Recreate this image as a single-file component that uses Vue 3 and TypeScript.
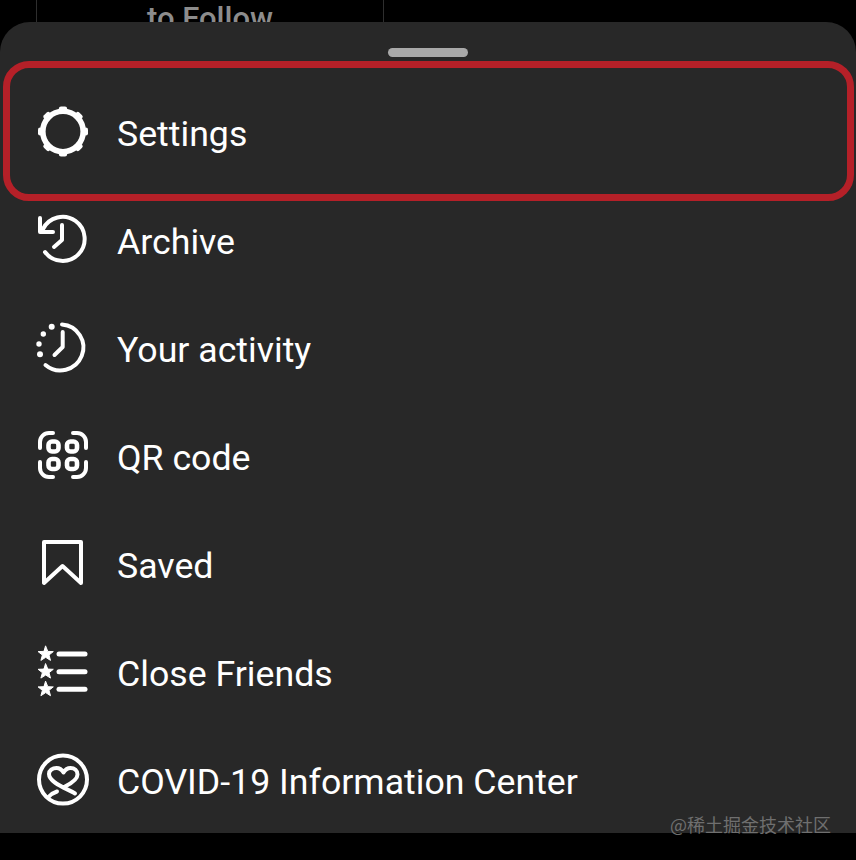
<script setup lang="ts">
const rows = [
  { icon: "settings", label: "Settings", active: true },
  { icon: "archive", label: "Archive" },
  { icon: "activity", label: "Your activity" },
  { icon: "qr", label: "QR code" },
  { icon: "saved", label: "Saved" },
  { icon: "friends", label: "Close Friends" },
  { icon: "covid", label: "COVID-19 Information Center" },
];

const gearTeeth = [0, 45, 90, 135, 180, 225, 270, 315];
const starRows = [10, 27.7, 45.3];
</script>

<template>
  <div class="screen">
    <div class="backdrop">
      <div class="behind-card">
        <span class="behind-text">to Follow</span>
      </div>
    </div>

    <div class="sheet">
      <div class="handle"></div>

      <div v-for="row in rows" :key="row.label" class="row">
        <span v-if="row.active" class="highlight"></span>

        <svg class="icon" viewBox="0 0 54 54" fill="none" stroke="#fff" stroke-width="4" stroke-linecap="round" stroke-linejoin="round">
          <template v-if="row.icon === 'settings'">
            <circle cx="27" cy="27.5" r="20.2" stroke-width="5.6" />
            <path
              v-for="a in gearTeeth"
              :key="a"
              d="M25 4.6 H29"
              stroke-width="4.2"
              :transform="`rotate(${a} 27 27.5)`"
            />
          </template>

          <template v-else-if="row.icon === 'archive'">
            <path d="M4 6 V20 H17" />
            <path d="M7 17 A22 22 0 1 1 9 40" />
            <path d="M26 13 V28 L18 35" />
          </template>

          <template v-else-if="row.icon === 'activity'">
            <path d="M26 4.5 A23 23 0 1 1 9.5 45" />
            <path d="M26.7 12 V27 L18.5 35" />
            <g fill="#fff" stroke="none">
              <circle cx="15.7" cy="6.7" r="3" />
              <circle cx="7.3" cy="14" r="2.7" />
              <circle cx="3" cy="24" r="2.7" />
              <circle cx="4" cy="34.3" r="3" />
            </g>
          </template>

          <template v-else-if="row.icon === 'qr'">
            <path d="M17 5 H13 A9 9 0 0 0 4 14 V20" />
            <path d="M37 5 H41 A9 9 0 0 1 50 14 V20" />
            <path d="M4 34 V40 A9 9 0 0 0 13 49 H17" />
            <path d="M50 34 V40 A9 9 0 0 1 41 49 H37" />
            <g stroke-width="4.6">
              <rect x="12.5" y="13.5" width="10" height="10" rx="3.5" />
              <rect x="31" y="13.5" width="10" height="10" rx="3.5" />
              <rect x="12.5" y="31" width="10" height="10" rx="3.5" />
              <rect x="31" y="31" width="10" height="10" rx="3.5" />
            </g>
          </template>

          <template v-else-if="row.icon === 'saved'">
            <path d="M8 6 H45 V47 L26.5 30 L8 47 Z" />
          </template>

          <template v-else-if="row.icon === 'friends'">
            <g v-for="y in starRows" :key="y">
              <polygon
                points="0,-7.8 2.1,-2.6 7.6,-2.4 3.3,1 4.8,6.4 0,3.3 -4.8,6.4 -3.3,1 -7.6,-2.4 -2.1,-2.6"
                fill="#fff"
                stroke-width="1"
                :transform="`translate(9.7 ${y})`"
              />
              <path :d="`M23 ${y} H49`" stroke-width="5" />
            </g>
          </template>

          <template v-else-if="row.icon === 'covid'">
            <circle cx="27" cy="27.6" r="24" />
            <path d="M39 41.5 C32 37 13 31 13 22 C13 18.5 16.5 16 20.5 16 C24 16 26 18 27.5 20.5 C29 18 31 16 34.5 16 C38.5 16 41.5 18.5 41.5 22.5 C41.5 27.5 35 31.5 29 34.5" />
            <path d="M12.5 45 C15 42 18 40.5 21 39.5" />
          </template>
        </svg>

        <span class="label">{{ row.label }}</span>
      </div>

      <span class="watermark">@稀土掘金技术社区</span>
    </div>
  </div>
</template>

<style scoped>
.screen {
  width: 856px;
  height: 860px;
  background: #000;
  overflow: hidden;
  font-family: Roboto, "Liberation Sans", sans-serif;
}

.backdrop {
  height: 22px;
  overflow: hidden;
  padding-left: 36px;
}

.behind-card {
  box-sizing: border-box;
  width: 348px;
  height: 22px;
  border-left: 1px solid #2e2e2e;
  border-right: 1px solid #2e2e2e;
  padding-left: 110px;
}

.behind-text {
  display: block;
  color: #8c8c8c;
  font-size: 31px;
  font-weight: 500;
  line-height: 38px;
}

.sheet {
  position: relative;
  box-sizing: border-box;
  height: 811px;
  padding-top: 26px;
  background: #282828;
  border-radius: 30px 30px 0 0;
}

.handle {
  width: 80px;
  height: 9px;
  margin: 0 auto 23px;
  border-radius: 5px;
  background: #a9a9a9;
}

.row {
  position: relative;
  display: flex;
  align-items: center;
  gap: 27px;
  height: 108px;
  padding-left: 36px;
}

.highlight {
  position: absolute;
  top: -19px;
  bottom: -13px;
  left: 3px;
  right: 2px;
  border: 7px solid #b52028;
  border-radius: 26px;
}

.icon {
  flex: none;
  width: 54px;
  height: 54px;
  margin-bottom: 6px;
  overflow: visible;
}

.label {
  color: #fff;
  font-size: 35.7px;
  line-height: 40px;
}

.watermark {
  position: absolute;
  right: 25px;
  bottom: -1px;
  color: #6f6f6f;
  font-family: "Noto Sans CJK SC", sans-serif;
  font-size: 18px;
  line-height: 20px;
}
</style>
